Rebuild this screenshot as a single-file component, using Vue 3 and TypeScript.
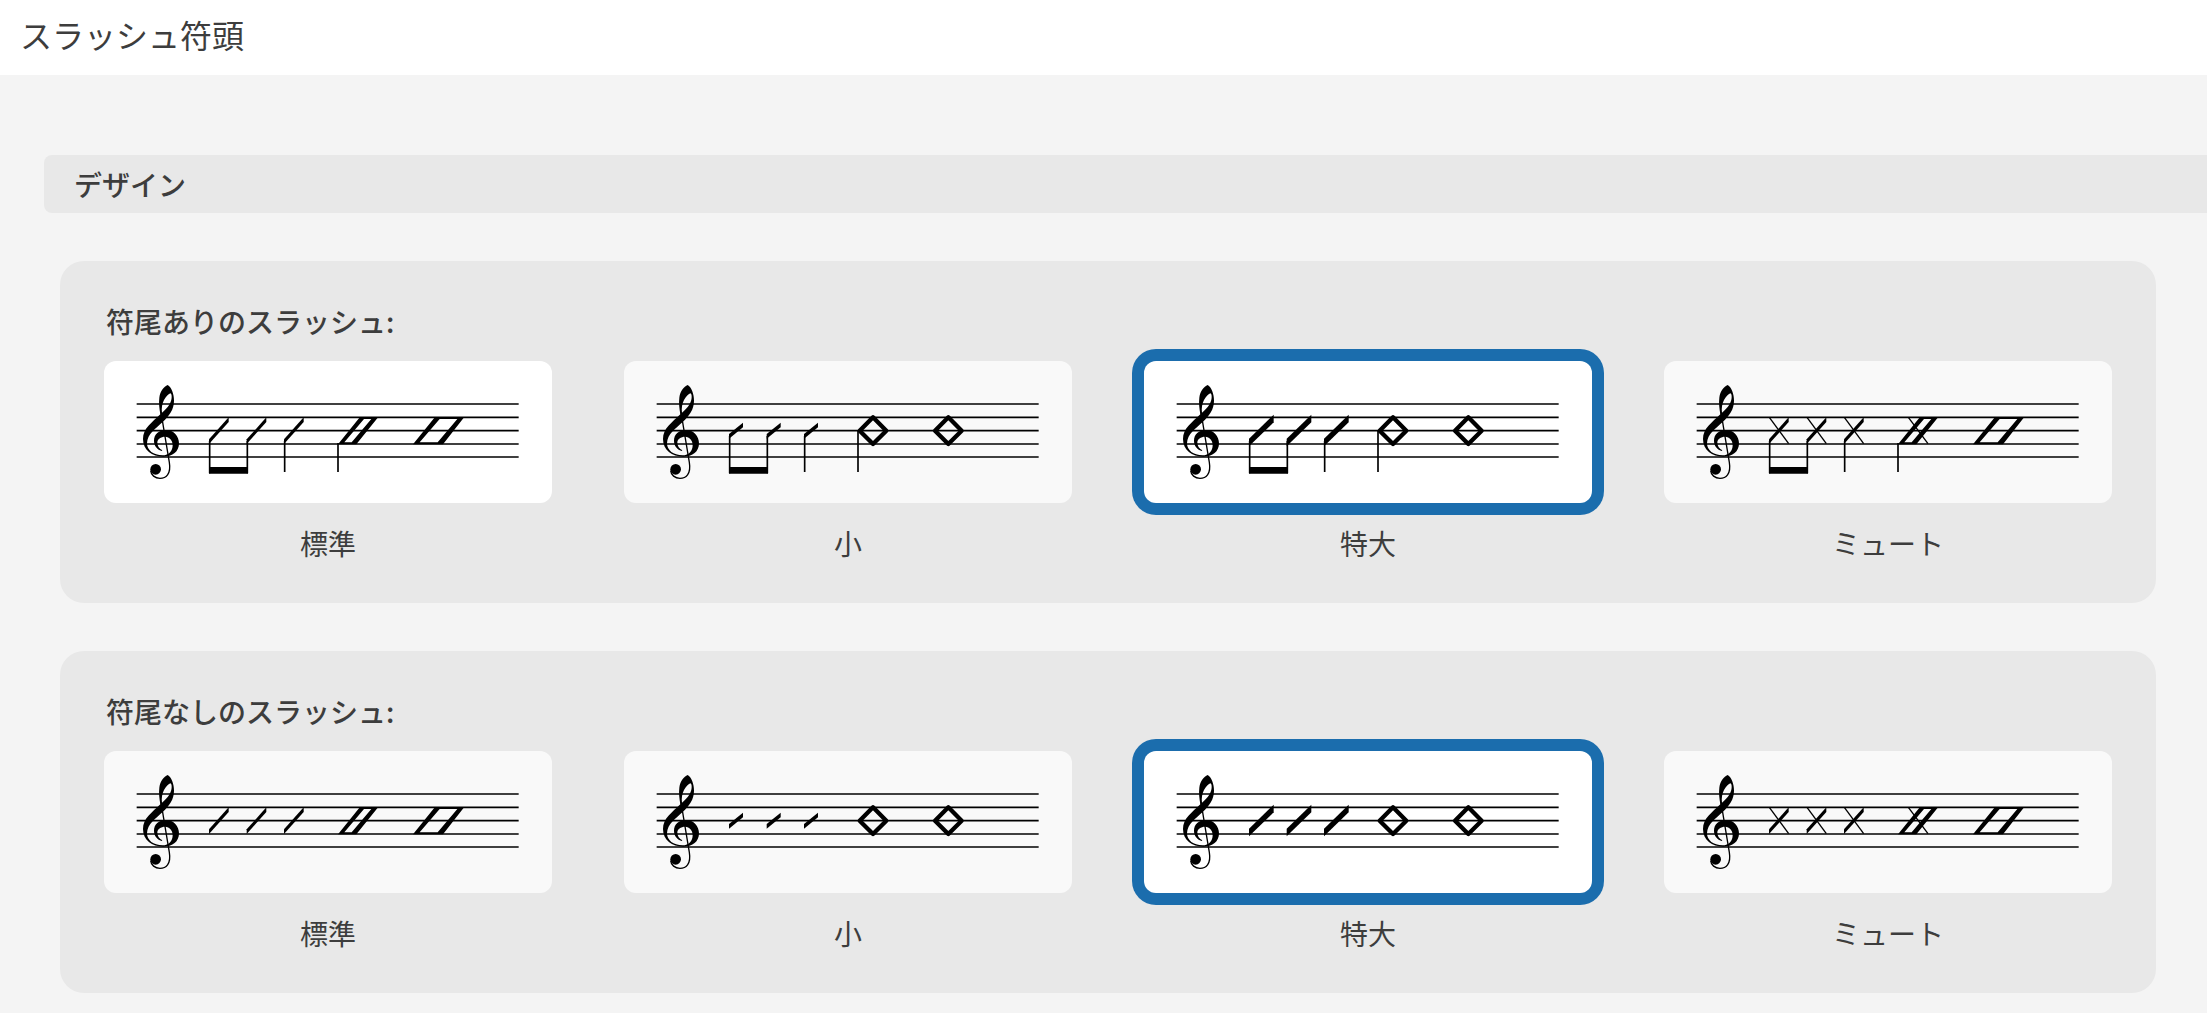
<script setup lang="ts">
import { ref } from 'vue'

type Head = 'standard' | 'small' | 'oversized' | 'muted'

interface Option {
  id: Head
  label: string
}

const options: Option[] = [
  { id: 'standard', label: '標準' },
  { id: 'small', label: '小' },
  { id: 'oversized', label: '特大' },
  { id: 'muted', label: 'ミュート' },
]

const groups = [
  { id: 'stemmed', title: '符尾ありのスラッシュ:', stems: true, selected: ref<Head>('oversized'), active: 'standard' },
  { id: 'stemless', title: '符尾なしのスラッシュ:', stems: false, selected: ref<Head>('oversized'), active: '' },
]

const staffLines = [129, 169, 209, 249, 288]
const quarterX = [0, 113, 225]

const slashes: Record<Head, string> = {
  standard: '315,235 374,169 374,183 315,249',
  small: '315,219 357,185 357,199 315,233',
  oversized: '315,233 389,161 389,184 315,256',
  muted: '315,235 374,169 374,183 315,249',
}

const stemTop: Record<Head, number> = { standard: 240, small: 225, oversized: 240, muted: 240 }

const isDiamond = (head: Head) => head === 'small' || head === 'oversized'
</script>

<template>
  <div class="page">
    <header class="topbar">
      <h1>スラッシュ符頭</h1>
    </header>
    <main>
      <h2 class="section">デザイン</h2>
      <section
        v-for="group in groups"
        :key="group.id"
        class="card"
        role="radiogroup"
        :aria-labelledby="`${group.id}-title`"
      >
        <h3 :id="`${group.id}-title`">{{ group.title }}</h3>
        <div class="options">
          <label v-for="option in options" :key="option.id" class="option">
            <span class="tile">
              <input
                v-model="group.selected.value"
                type="radio"
                :name="group.id"
                :value="option.id"
                :class="{ active: group.active === option.id }"
              />
              <svg viewBox="0 0 1344 426" aria-hidden="true">
                <path
                  v-for="y in staffLines"
                  :key="y"
                  :d="`M98 ${y}H1244`"
                  stroke="#000"
                  stroke-width="5"
                />
                <!-- treble clef -->
                <g transform="translate(78 42)">
                  <path
                    fill-rule="evenodd"
                    d="M113 30C124 36 132 56 132 77C132 103 118 122 98 141C78 160 52 176 51 205C51 226 70 241 98 241C116 241 128 228 128 210C128 196 118 185 106 185C92 185 82 192 82 203C82 213 88 221 97 226L95 228C80 223 72 211 72 197C72 178 86 165 108 165C131 165 147 184 147 205C147 230 128 245 100 245C66 245 39 226 39 192C39 160 66 143 91 118C88 100 86 84 88 68C90 50 102 34 113 30ZM121 55C108 60 92 85 96 113C114 98 125 82 125 66C125 60 124 56 121 55Z"
                  />
                  <path
                    d="M93 112L118 262C124 298 107 310 90 310C75 310 63 300 62 287"
                    fill="none"
                    stroke="#000"
                    stroke-width="4"
                  />
                  <circle cx="77" cy="283" r="16" />
                </g>
                <!-- slashes on quarter positions -->
                <g v-for="x in quarterX" :key="x" :transform="`translate(${x} 0)`">
                  <polygon :points="slashes[option.id]" />
                  <path v-if="option.id === 'muted'" d="M316 169L374 248" stroke="#000" stroke-width="4" />
                </g>
                <g v-if="group.stems" fill="none" stroke="#000" stroke-width="5">
                  <path :d="`M317 ${stemTop[option.id]}V337M430 ${stemTop[option.id]}V337M542 ${stemTop[option.id]}V333`" />
                  <path :d="`M702 ${isDiamond(option.id) ? 209 : 246}V333`" />
                </g>
                <path v-if="group.stems" d="M315 318H432V338H315Z" />
                <!-- half and whole note heads -->
                <g v-if="isDiamond(option.id)" fill="none" stroke="#000" stroke-width="13" stroke-linejoin="round">
                  <path d="M747 169L787 209L747 249L707 209Z" />
                  <path d="M973 169L1013 209L973 249L933 209Z" />
                </g>
                <g v-else fill-rule="evenodd">
                  <path d="M702 250L768 168H823L757 250ZM721 244H743L802 174H780Z" />
                  <path d="M927 250L993 168H1081L1017 250ZM947 244H1001L1060 174H1007Z" />
                  <path v-if="option.id === 'muted'" d="M733 169L792 248" stroke="#000" stroke-width="4" />
                </g>
              </svg>
            </span>
            <span class="caption">{{ option.label }}</span>
          </label>
        </div>
      </section>
    </main>
  </div>
</template>

<style>
body {
  margin: 0;
  background: #f4f4f4;
}
</style>

<style scoped>
.page {
  color: #3d3d3d;
  font-family: 'Noto Sans CJK JP', sans-serif;
  font-size: 28px;
  line-height: 40px;
}

h1,
h2,
h3 {
  margin: 0;
}

.topbar {
  padding: 14px 20px 21px;
  background: #fff;
}

h1 {
  font-size: 32px;
  font-weight: 400;
}

main {
  display: flex;
  flex-direction: column;
  gap: 48px;
  padding: 80px 0 20px 44px;
}

.section {
  padding: 9px 30px;
  border-radius: 8px 0 0 8px;
  background: #e8e8e8;
  font-size: 28px;
  font-weight: 500;
}

.card {
  margin: 0 51px 0 16px;
  padding: 40px 44px;
  border-radius: 24px;
  background: #e8e8e8;
}

h3 {
  margin-bottom: 20px;
  padding-left: 2px;
  font-size: 28px;
  font-weight: 500;
}

.options {
  display: grid;
  grid-template-columns: repeat(4, 1fr);
  gap: 72px;
}

.option {
  display: flex;
  flex-direction: column;
  gap: 20px;
  cursor: pointer;
}

.tile {
  display: grid;
}

.tile > * {
  grid-area: 1 / 1;
}

.tile input {
  appearance: none;
  margin: 0;
  border-radius: 12px;
  background: #f9f9f9;
  cursor: pointer;
}

.tile input.active {
  background: #fff;
}

.tile input:checked {
  background: #fff;
  box-shadow: 0 0 0 12px #1b6dad;
}

.tile svg {
  display: block;
  width: 100%;
  pointer-events: none;
}

.caption {
  text-align: center;
}
</style>
